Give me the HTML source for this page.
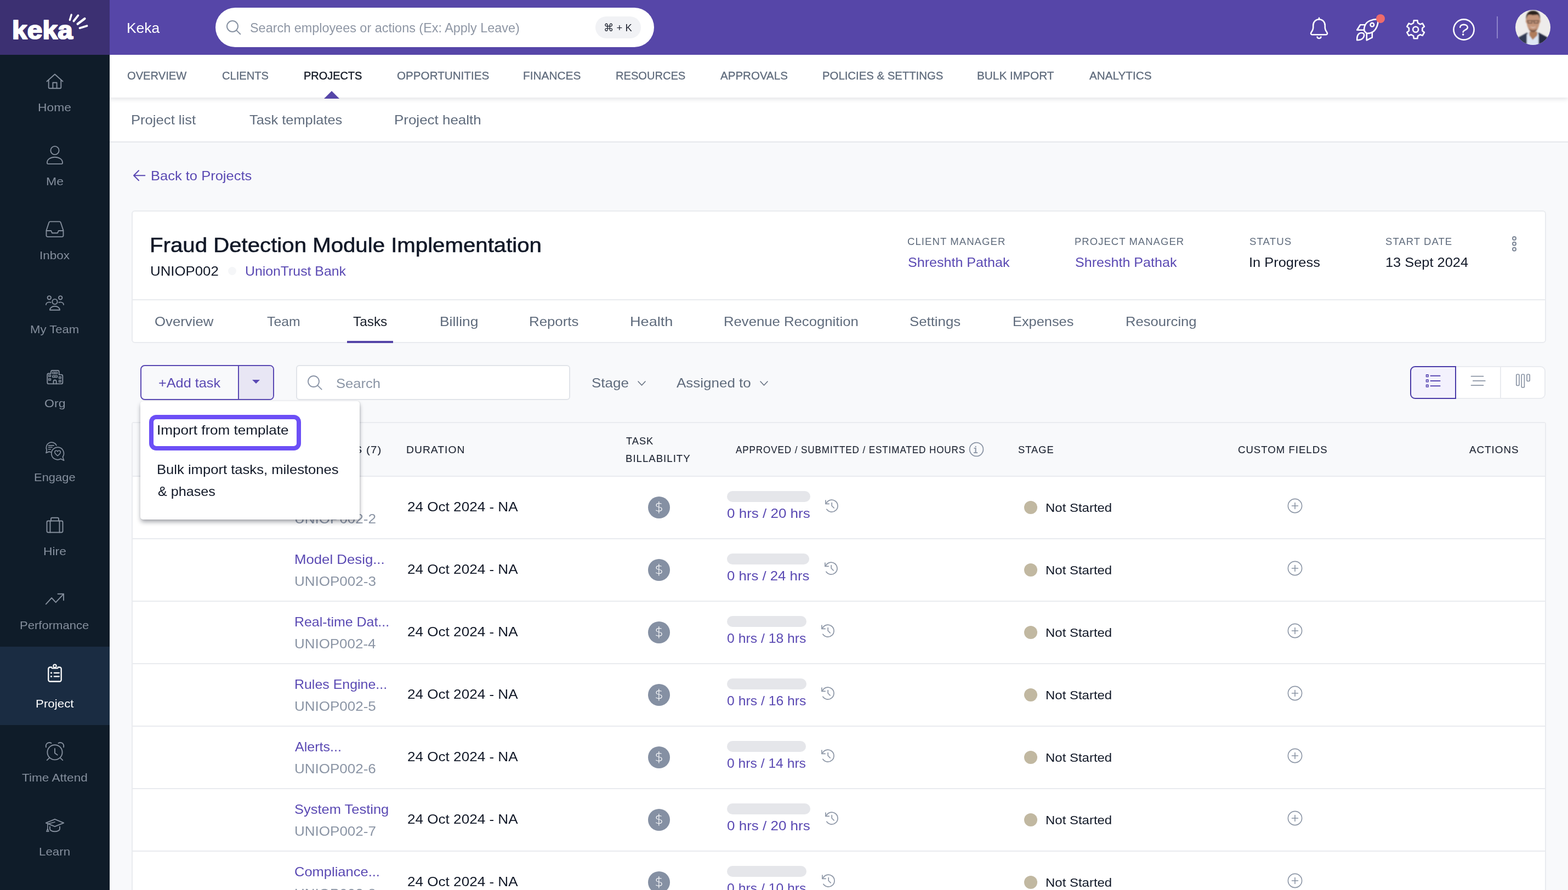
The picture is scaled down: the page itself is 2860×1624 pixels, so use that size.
<!DOCTYPE html>
<html lang="en">
<head>
<meta charset="utf-8">
<title>Keka - Fraud Detection Module Implementation - Tasks</title>
<style>
*{box-sizing:border-box;margin:0;padding:0}
html,body{width:2860px;height:1624px;overflow:hidden;background:#f8f9fb;font-family:"Liberation Sans", sans-serif;-webkit-font-smoothing:antialiased}
.abs{position:absolute;display:block}
.t{position:absolute;display:block;white-space:pre;transform-origin:0 50%}
#app{position:relative;width:2860px;height:1624px;overflow:hidden;background:#f8f9fb}
aside{position:absolute;left:0;top:0;width:200px;height:1624px;background:#0f1c29}
.logo{position:absolute;left:0;top:0;width:200px;height:100px;background:#3c3072}
.active{position:absolute;left:0;top:1180px;width:200px;height:143px;background:#1a2c42}
header{position:absolute;left:200px;top:0;width:2660px;height:100px;background:#5646a8}
.search{position:absolute;left:393px;top:14px;width:800px;height:72px;border-radius:36px;background:#fff}
.kbd{position:absolute;left:1086px;top:30px;width:83px;height:40px;border-radius:20px;background:#f1f2f5}
nav.mod{position:absolute;left:200px;top:100px;width:2660px;height:78px;background:#fff;box-shadow:0 3px 8px rgba(40,50,70,.13)}
.tri{position:absolute;left:591px;top:166px;width:0;height:0;border-left:14px solid transparent;border-right:14px solid transparent;border-bottom:14px solid #5646a8}
nav.sub{position:absolute;left:200px;top:178px;width:2660px;height:82px;background:#fff;border-bottom:2px solid #e6e8ec}
.card{position:absolute;left:240px;top:384px;width:2580px;height:242px;background:#fff;border:2px solid #e9ebef;border-radius:6px}
.cardline{position:absolute;left:242px;top:546px;width:2576px;height:2px;background:#e9ebef}
.tabline{position:absolute;left:633px;top:622px;width:84px;height:4px;background:#5646a8}
.addbtn{position:absolute;left:256px;top:666px;width:244px;height:64px;border:2px solid #5a49b3;border-radius:8px;background:#f8f9fb;overflow:hidden}
.addbtn i{position:absolute;left:176px;top:0;width:66px;height:60px;background:#e8e6f4;border-left:2px solid #5a49b3}
.caret{position:absolute;left:460px;top:693px;width:0;height:0;border-left:7px solid transparent;border-right:7px solid transparent;border-top:7px solid #5a49b3}
.sbox{position:absolute;left:540px;top:666px;width:500px;height:64px;border:2px solid #e1e4e9;border-radius:6px;background:#fff}
.views{position:absolute;left:2572px;top:668px;width:247px;height:60px;border:2px solid #e9ebef;border-radius:9px;background:#fff}
.views .on{position:absolute;left:-2px;top:-2px;width:84px;height:60px;border:2px solid #4a3aa8;border-radius:9px 0 0 9px;background:#f3f1fd}
.views .dv{position:absolute;left:162px;top:0;width:2px;height:56px;background:#e9ebef}
.table{position:absolute;left:240px;top:770px;width:2580px;height:900px;background:#fff;border:2px solid #e9ebef;border-radius:4px}
.thead{position:absolute;left:242px;top:772px;width:2576px;height:96px;background:#f8f9fb}
.hline{position:absolute;left:242px;top:868px;width:2576px;height:2px;background:#e9ebef}
.row{position:absolute;left:242px;width:2576px;height:114px;border-bottom:2px solid #e9ebef}
.drop{position:absolute;left:256px;top:732px;width:400px;height:216px;background:#fff;border-radius:5px;box-shadow:0 5px 9px -1px rgba(10,15,30,.40),1px 0 3px rgba(10,15,30,.10)}
.hl{position:absolute;left:272px;top:757px;width:277px;height:65px;border:8px solid #6c4ff6;border-radius:13px}
@media (max-width:1600px){#app{zoom:.5}}
</style>
</head>
<body>
<div id="app">

<nav class="sub" aria-label="Project sections"></nav>
<span class="t" style="left:239px;top:203px;font-size:24px;line-height:32px;color:#5f6b7c;transform:scaleX(1.0676);">Project list</span>
<span class="t" style="left:455px;top:203px;font-size:24px;line-height:32px;color:#5f6b7c;transform:scaleX(1.0572);">Task templates</span>
<span class="t" style="left:719px;top:203px;font-size:24px;line-height:32px;color:#5f6b7c;transform:scaleX(1.0810);">Project health</span>
<nav class="mod" aria-label="Modules"></nav>
<span class="t" style="left:232px;top:124px;font-size:21px;line-height:28px;color:#5f6b7c;-webkit-text-stroke:0.3px #5f6b7c;transform:scaleX(0.9596);">OVERVIEW</span>
<span class="t" style="left:405px;top:124px;font-size:21px;line-height:28px;color:#5f6b7c;-webkit-text-stroke:0.3px #5f6b7c;transform:scaleX(0.9576);">CLIENTS</span>
<span class="t" style="left:554px;top:124px;font-size:21px;line-height:28px;color:#141a26;-webkit-text-stroke:0.45px #141a26;transform:scaleX(0.9487);">PROJECTS</span>
<span class="t" style="left:724px;top:124px;font-size:21px;line-height:28px;color:#5f6b7c;-webkit-text-stroke:0.3px #5f6b7c;transform:scaleX(0.9826);">OPPORTUNITIES</span>
<span class="t" style="left:954px;top:124px;font-size:21px;line-height:28px;color:#5f6b7c;-webkit-text-stroke:0.3px #5f6b7c;transform:scaleX(0.9928);">FINANCES</span>
<span class="t" style="left:1123px;top:124px;font-size:21px;line-height:28px;color:#5f6b7c;-webkit-text-stroke:0.3px #5f6b7c;transform:scaleX(0.9566);">RESOURCES</span>
<span class="t" style="left:1314px;top:124px;font-size:21px;line-height:28px;color:#5f6b7c;-webkit-text-stroke:0.3px #5f6b7c;transform:scaleX(0.9778);">APPROVALS</span>
<span class="t" style="left:1500px;top:124px;font-size:21px;line-height:28px;color:#5f6b7c;-webkit-text-stroke:0.3px #5f6b7c;transform:scaleX(0.9682);">POLICIES &amp; SETTINGS</span>
<span class="t" style="left:1782px;top:124px;font-size:21px;line-height:28px;color:#5f6b7c;-webkit-text-stroke:0.3px #5f6b7c;transform:scaleX(0.9897);">BULK IMPORT</span>
<span class="t" style="left:1987px;top:124px;font-size:21px;line-height:28px;color:#5f6b7c;-webkit-text-stroke:0.3px #5f6b7c;transform:scaleX(0.9857);">ANALYTICS</span>
<div class="tri"></div>

<header></header>
<div class="search"></div>
<div class="kbd"></div>
<svg class="abs" style="left:411.3px;top:35.4px" width="37.5" height="37.5" viewBox="411.3 35.4 37.5 37.5" fill="none" stroke="#8792a2" stroke-width="2" stroke-linecap="round"><circle cx="424.3" cy="48.4" r="10"/><path d="M431.9 56.0l6.7 6.7"/></svg>
<span class="t" style="left:231px;top:34px;font-size:26px;line-height:34px;color:#ffffff;transform:scaleX(1.0151);">Keka</span>
<span class="t" style="left:456px;top:35px;font-size:24.5px;line-height:32px;color:#8e96a4;transform:scaleX(0.9554);">Search employees or actions (Ex: Apply Leave)</span>
<span class="t" style="left:1101px;top:39px;font-size:19px;line-height:24px;color:#1f2430;transform:scaleX(0.9707);">⌘ + K</span>
<svg class="abs" style="left:2340px;top:0" width="520" height="100" viewBox="2340 0 520 100" fill="none" stroke="#fff" stroke-width="2.600" stroke-linecap="round" stroke-linejoin="round">
<path d="M2406 32.700v2.300"/><path d="M2406 35.200c-6 0-10.800 4.900-10.800 11v4c0 4-1.600 6.200-3.600 9-1.300 1.800-.300 4.100 1.800 4.100h25.200c2.100 0 3.100-2.300 1.800-4.100-2-2.800-3.600-5-3.600-9v-4c0-6.100-4.800-11-10.800-11z"/><path d="M2402.600 67.600a3.600 3.600 0 0 0 6.800 0"/>
<path d="M2513.200 35.200C2503 34.700 2493.500 39 2490.700 44.500 2488.600 48.500 2487.600 53 2488.500 56.500L2492.700 60.800C2497 61.200 2501.500 60 2505 57.500 2510.200 53.500 2514.500 44.500 2513.200 35.200Z"/><circle cx="2502.800" cy="45.200" r="3.300"/><path d="M2489.800 45.300h-8.600l-6 9.400h13"/><path d="M2502.800 59.200v9.200l-10 5v-12.500"/><path d="M2475.200 73.200C2475 68 2476.500 63.500 2478.700 61.600 2481.500 59.200 2485.500 59.700 2487.500 61.400 2489 64.500 2487.500 68.500 2485 70.500 2482.500 72.500 2479 73.200 2475.200 73.200Z"/>
<path d="M2578.8 37.4 L2585.4 37.4 L2586.1 41.9 L2590.4 44.4 L2594.6 42.7 L2597.9 48.5 L2594.3 51.3 L2594.3 56.3 L2597.9 59.1 L2594.6 64.9 L2590.4 63.2 L2586.1 65.7 L2585.4 70.2 L2578.8 70.2 L2578.1 65.7 L2573.8 63.2 L2569.6 64.9 L2566.3 59.1 L2569.9 56.3 L2569.9 51.3 L2566.3 48.5 L2569.6 42.7 L2573.8 44.4 L2578.1 41.9Z" stroke-linejoin="round"/><circle cx="2582.1" cy="53.8" r="5"/>
<circle cx="2670" cy="54" r="18.600"/><path d="M2663.200 49.800c0-2.800 2.800-4.900 6.700-4.900s7 2.100 7 5.200c0 4.600-8.200 4.400-8.200 8.500"/><path d="M2668.700 63v.100" stroke-width="3.600"/>
<path d="M2731 30.500v39" stroke="#9d93d3" stroke-width="1.600"/>
<circle cx="2518" cy="34" r="8" fill="#ee6b6b" stroke="none"/>
</svg>
<svg class="abs" style="left:2764px;top:18px" width="64" height="64" viewBox="0 0 64 64"><defs><clipPath id="avc"><circle cx="32" cy="32" r="32"/></clipPath><filter id="avb" x="-20%" y="-20%" width="140%" height="140%"><feGaussianBlur stdDeviation="0.900"/></filter></defs><g clip-path="url(#avc)"><rect width="64" height="64" fill="#eeeceb"/><g filter="url(#avb)"><path d="M5 66V50.500L21.300 41.500l10.700 6 10.200-6L59 50.500V66z" fill="#333a52"/><path d="M42.200 41.500 59 50.500V66H43z" fill="#272c42"/><path d="M20.800 66V45l4.800-4.500h14.400l2.400 4.500V66z" fill="#dde6f4"/><path d="M25.600 40h14.400v6.500l-8.400 8.300-6-8.300z" fill="#b07d5c"/><path d="M19.800 18c0-8 5-14.500 12.500-14.500S45 10 44.800 18c.8 0 1.200 1.600.8 3.600-.3 1.800-1 3-1.800 3-.8 7.500-5.500 16.400-11.500 16.400S21.500 32.100 20.800 24.600c-.8 0-1.500-1.200-1.800-3-.4-2 0-3.600.8-3.600z" fill="#c4957a"/><path d="M23.500 33c2 5 5.200 8 8.800 8s6.800-3 8.800-8c-1.500 2.600-5 3.800-8.800 3.800s-7.300-1.200-8.800-3.800z" fill="#6b4a38" opacity=".75"/><path d="M19.600 18.500C18.500 8 23.500 1.600 32.300 1.600S46 8 45 18.500c-.7-5-2.500-8.700-4.600-9.700-3 .8-12.800.8-16 0-2.200 1-4 4.700-4.800 9.700z" fill="#2b221f"/><path d="M27.300 30c1.800 2.600 8.200 2.600 10 0-.8 3.600-9.200 3.600-10 0z" fill="#fbf6f3"/><path d="M21 19.700h22.500M22.800 19.500h7.600v4.600h-7.600zM34 19.500h7.600v4.600H34z" fill="none" stroke="#4a3a33" stroke-width="1.100"/></g></g></svg>

<aside>
<div class="logo"></div>
<div class="active"></div>
</aside>
<svg class="abs" style="left:0;top:0" width="200" height="100" viewBox="0 0 200 100"><text x="0" y="0" transform="translate(21.900 71.400) scale(1.085 1)" font-family="Liberation Sans, sans-serif" font-weight="700" font-size="45.500" fill="#fff" stroke="#fff" stroke-width="2.200" stroke-linejoin="round" letter-spacing="0.300">keka</text></svg><svg class="abs" style="left:0;top:0" width="200" height="100" viewBox="0 0 200 100" fill="none" stroke="#fff" stroke-linecap="round"><path d="M127.300 36.500 130.200 27" stroke-width="3.400"/><path d="M134.400 38.500 142.500 28.200" stroke-width="3.800"/><path d="M141.600 43.700 154.500 34" stroke-width="4.200"/><path d="M145.500 51.300 158.500 47.200" stroke-width="3.800"/></svg>
<svg class="abs" style="left:0;top:0" width="200" height="1624" viewBox="0 0 200 1624" fill="none" stroke="#858f9d" stroke-width="1.900" stroke-linecap="round" stroke-linejoin="round">
<path d="M85.500 148.500 100 135.500 114.500 148.500"/><path d="M88.700 146v13.200a2 2 0 0 0 2 2h18.600a2 2 0 0 0 2-2V146"/><path d="M96.400 161v-10.300h7.200V161"/>
<circle cx="100" cy="274.500" r="7.600"/><path d="M86 296.500c0-5.600 6-9.800 14-9.800s14 4.200 14 9.800v.8a1.800 1.800 0 0 1-1.800 1.800H87.800a1.800 1.800 0 0 1-1.800-1.800z"/>
<path d="M84.500 420.500 89.300 406a2.400 2.400 0 0 1 2.200-1.600h17a2.400 2.400 0 0 1 2.200 1.600l4.800 14.500v9.200a2.400 2.400 0 0 1-2.400 2.400H86.900a2.400 2.400 0 0 1-2.400-2.400z"/><path d="M84.800 421h8.400l1.800 4.200h10l1.800-4.200h8.400"/>
<circle cx="100" cy="550.500" r="4.600"/><path d="M91 565.800c0-4.200 4-7 9-7s9 2.800 9 7z"/><circle cx="89.800" cy="543.300" r="3.200"/><circle cx="110.200" cy="543.300" r="3.200"/><path d="M84 556c0-2.600 2.400-4.600 5.800-4.600 1 0 2 .2 2.800.5"/><path d="M116 556c0-2.600-2.400-4.600-5.800-4.600-1 0-2 .2-2.800.5"/>
<path d="M86.300 698V684a2.500 2.500 0 0 1 2.500-2.500H93V678.500a2.500 2.500 0 0 1 2.500-2.500h9.700a2.500 2.500 0 0 1 2.500 2.500v5.100h4.100a2.500 2.500 0 0 1 2.500 2.500V698a2.400 2.400 0 0 1-2.400 2.400H88.700a2.400 2.400 0 0 1-2.400-2.400z"/><path d="M97.500 700.400v-4.300a2.600 2.600 0 0 1 5.200 0v4.300"/><path d="M96 679h8.400v3H96zM100.200 679v3M96 685.600h8.400v3H96zM100.200 685.600v3M89 684.300h3.500v3H89zM89 691h3.500v3H89zM107.600 687.500h3.500v3h-3.500zM107.600 694h3.500v3h-3.500z" stroke-width="1.500"/>
<path d="M103 812.600A9.600 9.600 0 1 0 85.300 821.300L84.100 826.400 89.500 824.100A9.600 9.600 0 0 0 92.600 824.900" stroke-width="1.700"/><path d="M88.400 812.900h9.800M88.400 816.300h6.700M88.400 819.800h4" stroke-width="1.600"/><path d="M110.700 837.200A11.300 11.300 0 1 1 114.400 833.800L116.600 840.200Z" stroke-width="1.700"/><path d="M105.100 831.700c-2.600-2-5.300-4-5.300-6.600a2.800 2.800 0 0 1 5.300-1.300 2.800 2.800 0 0 1 5.300 1.300c0 2.600-2.700 4.600-5.300 6.600z" stroke-width="1.600"/>
<rect x="85.500" y="950.500" width="29" height="21" rx="2.500"/><path d="M93 950.500v-3.700a2 2 0 0 1 2-2h10a2 2 0 0 1 2 2v3.700"/><path d="M91.500 950.500v21M108.500 950.500v21"/>
<path d="M83.800 1102.300 94.200 1091l7.500 8.200 14.300-15.400"/><path d="M105.500 1083.800h10.500v11.500"/>
<circle cx="100" cy="1372.800" r="13.600"/><path d="M100 1366v8.200l4.700 3.400"/><path d="M83.900 1363.400c-1.200-4.400 1.800-8.400 6-8.400 1.400 0 2.600.3 3.600 1M116.100 1363.400c1.200-4.400-1.800-8.400-6-8.400-1.400 0-2.600.3-3.600 1M90.200 1382.900l-4.500 4.200M109.800 1382.900l4.500 4.200"/>
<path d="M100 1494.800 83.800 1501.600 100 1508.200 116.200 1501.600z"/><path d="M91 1508.500v4c0 2.700 4 4.800 9 4.800s9-2.100 9-4.800v-4"/><path d="M100 1499.900 86.900 1503.400v8.600M86.900 1512l-1.900 5.300h3.800z" stroke-width="1.600"/>
</svg>
<svg class="abs" style="left:0;top:0" width="200" height="1624" viewBox="0 0 200 1624" fill="none" stroke="#ffffff" stroke-width="2.300" stroke-linecap="round" stroke-linejoin="round">
<path d="M94.300 1217.500h-3a3 3 0 0 0-3 3v20a3 3 0 0 0 3 3h17.400a3 3 0 0 0 3-3v-20a3 3 0 0 0-3-3h-3"/><circle cx="100" cy="1215.300" r="2.700" stroke-width="2"/><path d="M94.800 1219.400h10.400"/><path d="M98.800 1227.800h9M98.800 1234.300h9"/><path d="M93.500 1227.800h.100M93.500 1234.300h.100" stroke-width="3.200"/>
</svg>
<span class="t" style="left:69px;top:183px;font-size:20.2px;line-height:26px;color:#858f9d;transform:scaleX(1.1317);">Home</span>
<span class="t" style="left:84px;top:318px;font-size:20.2px;line-height:26px;color:#858f9d;transform:scaleX(1.1399);">Me</span>
<span class="t" style="left:72px;top:453px;font-size:20.2px;line-height:26px;color:#858f9d;transform:scaleX(1.1146);">Inbox</span>
<span class="t" style="left:55px;top:588px;font-size:20.2px;line-height:26px;color:#858f9d;transform:scaleX(1.0936);">My Team</span>
<span class="t" style="left:81px;top:723px;font-size:20.2px;line-height:26px;color:#858f9d;transform:scaleX(1.1442);">Org</span>
<span class="t" style="left:62px;top:858px;font-size:20.2px;line-height:26px;color:#858f9d;transform:scaleX(1.0862);">Engage</span>
<span class="t" style="left:79px;top:993px;font-size:20.2px;line-height:26px;color:#858f9d;transform:scaleX(1.1323);">Hire</span>
<span class="t" style="left:36px;top:1128px;font-size:20.2px;line-height:26px;color:#858f9d;transform:scaleX(1.0934);">Performance</span>
<span class="t" style="left:65px;top:1271px;font-size:20.2px;line-height:26px;color:#ffffff;transform:scaleX(1.1064);">Project</span>
<span class="t" style="left:40px;top:1406px;font-size:20.2px;line-height:26px;color:#858f9d;transform:scaleX(1.1200);">Time Attend</span>
<span class="t" style="left:71px;top:1541px;font-size:20.2px;line-height:26px;color:#858f9d;transform:scaleX(1.1058);">Learn</span>

<main>
<svg class="abs" style="left:240px;top:308px" width="28" height="24" viewBox="240 308 28 24" fill="none" stroke="#5a49b3" stroke-width="2" stroke-linecap="round" stroke-linejoin="round"><path d="M264.300 320.300h-20.300M253 311.300l-9 9 9 9"/></svg>
<span class="t" style="left:275px;top:305px;font-size:24px;line-height:32px;color:#5a49b3;transform:scaleX(1.0626);">Back to Projects</span>

<section class="card"></section>
<div class="cardline"></div>
<div class="tabline"></div>
<div class="abs" style="left:416px;top:487px;width:15px;height:15px;border-radius:50%;background:#f5f6f8"></div>
<svg class="abs" style="left:2754px;top:428px" width="16" height="34" viewBox="2754 428 16 34" fill="none" stroke="#7d8797" stroke-width="2"><circle cx="2762" cy="434.900" r="3"/><circle cx="2762" cy="444.800" r="3"/><circle cx="2762" cy="454.800" r="3"/></svg>
<span class="t" style="left:273px;top:423px;font-size:37.2px;line-height:48px;color:#111827;-webkit-text-stroke:0.6px #111827;transform:scaleX(1.0809);">Fraud Detection Module Implementation</span>
<span class="t" style="left:274px;top:479px;font-size:24px;line-height:32px;color:#111827;transform:scaleX(1.0750);">UNIOP002</span>
<span class="t" style="left:447px;top:479px;font-size:24px;line-height:32px;color:#5a49b3;transform:scaleX(1.0340);">UnionTrust Bank</span>
<span class="t" style="left:1655px;top:429px;font-size:17.8px;line-height:24px;color:#5f6b7c;letter-spacing:1px;transform:scaleX(1.0445);">CLIENT MANAGER</span>
<span class="t" style="left:1656px;top:463px;font-size:24px;line-height:32px;color:#5a49b3;transform:scaleX(1.0450);">Shreshth Pathak</span>
<span class="t" style="left:1960px;top:429px;font-size:17.8px;line-height:24px;color:#5f6b7c;letter-spacing:1px;transform:scaleX(1.0398);">PROJECT MANAGER</span>
<span class="t" style="left:1961px;top:463px;font-size:24px;line-height:32px;color:#5a49b3;transform:scaleX(1.0450);">Shreshth Pathak</span>
<span class="t" style="left:2279px;top:429px;font-size:17.8px;line-height:24px;color:#5f6b7c;letter-spacing:1px;transform:scaleX(1.0499);">STATUS</span>
<span class="t" style="left:2278px;top:463px;font-size:24px;line-height:32px;color:#111827;transform:scaleX(1.0584);">In Progress</span>
<span class="t" style="left:2527px;top:429px;font-size:17.8px;line-height:24px;color:#5f6b7c;letter-spacing:1px;transform:scaleX(1.0411);">START DATE</span>
<span class="t" style="left:2527px;top:463px;font-size:24px;line-height:32px;color:#111827;transform:scaleX(1.0576);">13 Sept 2024</span>
<span class="t" style="left:282px;top:571px;font-size:24px;line-height:32px;color:#5f6b7c;transform:scaleX(1.0727);">Overview</span>
<span class="t" style="left:487px;top:571px;font-size:24px;line-height:32px;color:#5f6b7c;transform:scaleX(1.0336);">Team</span>
<span class="t" style="left:644px;top:571px;font-size:24px;line-height:32px;color:#141a26;transform:scaleX(1.0157);">Tasks</span>
<span class="t" style="left:802px;top:571px;font-size:24px;line-height:32px;color:#5f6b7c;transform:scaleX(1.1002);">Billing</span>
<span class="t" style="left:965px;top:571px;font-size:24px;line-height:32px;color:#5f6b7c;transform:scaleX(1.0757);">Reports</span>
<span class="t" style="left:1149px;top:571px;font-size:24px;line-height:32px;color:#5f6b7c;transform:scaleX(1.1307);">Health</span>
<span class="t" style="left:1320px;top:571px;font-size:24px;line-height:32px;color:#5f6b7c;transform:scaleX(1.0707);">Revenue Recognition</span>
<span class="t" style="left:1659px;top:571px;font-size:24px;line-height:32px;color:#5f6b7c;transform:scaleX(1.0737);">Settings</span>
<span class="t" style="left:1847px;top:571px;font-size:24px;line-height:32px;color:#5f6b7c;transform:scaleX(1.0565);">Expenses</span>
<span class="t" style="left:2053px;top:571px;font-size:24px;line-height:32px;color:#5f6b7c;transform:scaleX(1.0673);">Resourcing</span>

<div class="addbtn"><i></i></div>
<div class="caret"></div>
<div class="sbox"></div>
<svg class="abs" style="left:558.5px;top:682.5px" width="38" height="38" viewBox="558.5 682.5 38 38" fill="none" stroke="#8a94a6" stroke-width="1.8" stroke-linecap="round"><circle cx="571.5" cy="695.5" r="10"/><path d="M579.1 703.1l7.1 7.1"/></svg>
<svg class="abs" style="left:1161.5px;top:694.0px" width="17" height="11" viewBox="0 0 17 11" fill="none" stroke="#5f6b7c" stroke-width="1.5" stroke-linecap="round" stroke-linejoin="round"><path d="M2 2l6.5 7l6.5-7"/></svg>
<svg class="abs" style="left:1385.0px;top:694.0px" width="17" height="11" viewBox="0 0 17 11" fill="none" stroke="#5f6b7c" stroke-width="1.5" stroke-linecap="round" stroke-linejoin="round"><path d="M2 2l6.5 7l6.5-7"/></svg>
<div class="views"><div class="on"></div><div class="dv"></div></div>
<svg class="abs" style="left:2590px;top:680px" width="220" height="36" viewBox="2590 680 220 36" fill="none" stroke="#5a49b3" stroke-width="2" stroke-linecap="round">
<path d="M2609.500 685.700h17M2609.500 694.900h17M2609.500 704.200h17"/><path d="M2601.500 683.900h3.600v3.600h-3.600zM2601.500 693.100h3.600v3.600h-3.600zM2601.500 702.400h3.600v3.600h-3.600z" stroke-width="1.600" stroke-linejoin="round"/>
<path d="M2683.500 686.700h22M2686.800 694.900h22M2683.500 703.200h22" stroke="#8b95a5" stroke-width="1.700"/>
<rect x="2765.800" y="683" width="5.200" height="20.500" rx="2" stroke="#8b95a5" stroke-width="1.700"/><rect x="2775.200" y="683" width="5.200" height="24" rx="2" stroke="#8b95a5" stroke-width="1.700"/><rect x="2785" y="683" width="5.200" height="12.500" rx="2" stroke="#8b95a5" stroke-width="1.700"/>
</svg>
<span class="t" style="left:289px;top:683px;font-size:24px;line-height:32px;color:#5a49b3;transform:scaleX(1.0528);">+Add task</span>
<span class="t" style="left:613px;top:684px;font-size:24px;line-height:32px;color:#8b95a5;transform:scaleX(1.0651);">Search</span>
<span class="t" style="left:1079px;top:683px;font-size:24px;line-height:32px;color:#5f6b7c;transform:scaleX(1.0829);">Stage</span>
<span class="t" style="left:1234px;top:683px;font-size:24px;line-height:32px;color:#5f6b7c;transform:scaleX(1.0827);">Assigned to</span>

<section class="table"></section>
<div class="thead"></div>
<div class="hline"></div>
<span class="t" style="left:590px;top:809px;font-size:19px;line-height:24px;color:#1c2331;letter-spacing:1px;-webkit-text-stroke:0.12px #1c2331;transform:scaleX(1.0818);">TASKS (7)</span>
<span class="t" style="left:741px;top:809px;font-size:19px;line-height:24px;color:#1c2331;letter-spacing:1px;-webkit-text-stroke:0.12px #1c2331;transform:scaleX(1.0151);">DURATION</span>
<span class="t" style="left:1142px;top:793px;font-size:19px;line-height:24px;color:#1c2331;letter-spacing:1px;-webkit-text-stroke:0.12px #1c2331;transform:scaleX(0.9629);">TASK</span>
<span class="t" style="left:1141px;top:825px;font-size:19px;line-height:24px;color:#1c2331;letter-spacing:1px;-webkit-text-stroke:0.12px #1c2331;transform:scaleX(0.9814);">BILLABILITY</span>
<span class="t" style="left:1342px;top:809px;font-size:19px;line-height:24px;color:#1c2331;letter-spacing:1px;-webkit-text-stroke:0.12px #1c2331;transform:scaleX(0.8988);">APPROVED / SUBMITTED / ESTIMATED HOURS</span>
<span class="t" style="left:1857px;top:809px;font-size:19px;line-height:24px;color:#1c2331;letter-spacing:1px;-webkit-text-stroke:0.12px #1c2331;transform:scaleX(0.9643);">STAGE</span>
<span class="t" style="left:2258px;top:809px;font-size:19px;line-height:24px;color:#1c2331;letter-spacing:1px;-webkit-text-stroke:0.12px #1c2331;transform:scaleX(0.9806);">CUSTOM FIELDS</span>
<span class="t" style="left:2680px;top:809px;font-size:19px;line-height:24px;color:#1c2331;letter-spacing:1px;-webkit-text-stroke:0.12px #1c2331;transform:scaleX(0.9905);">ACTIONS</span>
<svg class="abs" style="left:1765.500px;top:804.800px" width="30" height="30" viewBox="-15 -15 30 30" fill="none" stroke="#8b95a5" stroke-width="1.800"><circle r="12.400"/></svg>
<span class="t" style="left:1775.200px;top:809.800px;font-size:18px;line-height:24px;color:#8b95a5;font-family:'Liberation Mono',monospace;font-weight:700;transform:scaleX(.8)">i</span>
<div class="row" style="top:870px"></div>
<span class="t" style="left:537px;top:931px;font-size:24px;line-height:32px;color:#8b95a5;transform:scaleX(1.0841);">UNIOP002-2</span>
<span class="t" style="left:743px;top:909px;font-size:24px;line-height:32px;color:#111827;transform:scaleX(1.0873);">24 Oct 2024 - NA</span>
<span class="t" style="left:1326px;top:921px;font-size:24px;line-height:32px;color:#5a49b3;transform:scaleX(1.0829);">0 hrs / 20 hrs</span>
<span class="t" style="left:1907px;top:911px;font-size:22.8px;line-height:30px;color:#111827;transform:scaleX(1.0510);">Not Started</span>
<div class="abs" style="left:1182px;top:906px;width:40px;height:40px;border-radius:50%;background:#8590a3"></div>
<span class="t" style="left:1182px;top:905px;width:40px;text-align:center;font-family:'DejaVu Sans',sans-serif;font-weight:200;font-size:23px;line-height:40px;color:#fff;transform-origin:50% 50%;transform:scaleX(1.05)">$</span>
<div class="abs" style="left:1326px;top:896px;width:151.6px;height:20px;border-radius:10px;background:#e5e6ea"></div>
<svg class="abs" style="left:1503.4px;top:909px" width="28" height="28" viewBox="-14 -14 28 28" fill="none" stroke="#8b95a5" stroke-width="1.700" stroke-linecap="round" stroke-linejoin="round"><path d="M-9.600 -5.200A11 11 0 1 1 -9.100 6.300"/><path d="M-11.100 -9.900V-3.600H-4.900"/><path d="M.200 -5.500V0l3.900 3.800"/></svg>
<div class="abs" style="left:1868px;top:914px;width:24px;height:24px;border-radius:50%;background:#c1b8a1"></div>
<svg class="abs" style="left:2346px;top:907px" width="32" height="32" viewBox="-16 -16 32 32" fill="none" stroke="#8b95a5" stroke-width="1.600" stroke-linecap="round"><circle r="12.600"/><path d="M-5.500 0h11M0 -5.500v11"/></svg>
<div class="row" style="top:984px"></div>
<span class="t" style="left:537px;top:1005px;font-size:24px;line-height:32px;color:#5a49b3;transform:scaleX(1.0736);">Model Desig...</span>
<span class="t" style="left:537px;top:1045px;font-size:24px;line-height:32px;color:#8b95a5;transform:scaleX(1.0836);">UNIOP002-3</span>
<span class="t" style="left:743px;top:1023px;font-size:24px;line-height:32px;color:#111827;transform:scaleX(1.0873);">24 Oct 2024 - NA</span>
<span class="t" style="left:1326px;top:1035px;font-size:24px;line-height:32px;color:#5a49b3;transform:scaleX(1.0735);">0 hrs / 24 hrs</span>
<span class="t" style="left:1907px;top:1025px;font-size:22.8px;line-height:30px;color:#111827;transform:scaleX(1.0510);">Not Started</span>
<div class="abs" style="left:1182px;top:1020px;width:40px;height:40px;border-radius:50%;background:#8590a3"></div>
<span class="t" style="left:1182px;top:1019px;width:40px;text-align:center;font-family:'DejaVu Sans',sans-serif;font-weight:200;font-size:23px;line-height:40px;color:#fff;transform-origin:50% 50%;transform:scaleX(1.05)">$</span>
<div class="abs" style="left:1326px;top:1010px;width:150.3px;height:20px;border-radius:10px;background:#e5e6ea"></div>
<svg class="abs" style="left:1502.4px;top:1023px" width="28" height="28" viewBox="-14 -14 28 28" fill="none" stroke="#8b95a5" stroke-width="1.700" stroke-linecap="round" stroke-linejoin="round"><path d="M-9.600 -5.200A11 11 0 1 1 -9.100 6.300"/><path d="M-11.100 -9.900V-3.600H-4.900"/><path d="M.200 -5.500V0l3.900 3.800"/></svg>
<div class="abs" style="left:1868px;top:1028px;width:24px;height:24px;border-radius:50%;background:#c1b8a1"></div>
<svg class="abs" style="left:2346px;top:1021px" width="32" height="32" viewBox="-16 -16 32 32" fill="none" stroke="#8b95a5" stroke-width="1.600" stroke-linecap="round"><circle r="12.600"/><path d="M-5.500 0h11M0 -5.500v11"/></svg>
<div class="row" style="top:1098px"></div>
<span class="t" style="left:537px;top:1119px;font-size:24px;line-height:32px;color:#5a49b3;transform:scaleX(1.0383);">Real-time Dat...</span>
<span class="t" style="left:537px;top:1159px;font-size:24px;line-height:32px;color:#8b95a5;transform:scaleX(1.0804);">UNIOP002-4</span>
<span class="t" style="left:743px;top:1137px;font-size:24px;line-height:32px;color:#111827;transform:scaleX(1.0873);">24 Oct 2024 - NA</span>
<span class="t" style="left:1326px;top:1149px;font-size:24px;line-height:32px;color:#5a49b3;transform:scaleX(1.0316);">0 hrs / 18 hrs</span>
<span class="t" style="left:1907px;top:1139px;font-size:22.8px;line-height:30px;color:#111827;transform:scaleX(1.0510);">Not Started</span>
<div class="abs" style="left:1182px;top:1134px;width:40px;height:40px;border-radius:50%;background:#8590a3"></div>
<span class="t" style="left:1182px;top:1133px;width:40px;text-align:center;font-family:'DejaVu Sans',sans-serif;font-weight:200;font-size:23px;line-height:40px;color:#fff;transform-origin:50% 50%;transform:scaleX(1.05)">$</span>
<div class="abs" style="left:1326px;top:1124px;width:144.5px;height:20px;border-radius:10px;background:#e5e6ea"></div>
<svg class="abs" style="left:1496.4px;top:1137px" width="28" height="28" viewBox="-14 -14 28 28" fill="none" stroke="#8b95a5" stroke-width="1.700" stroke-linecap="round" stroke-linejoin="round"><path d="M-9.600 -5.200A11 11 0 1 1 -9.100 6.300"/><path d="M-11.100 -9.900V-3.600H-4.900"/><path d="M.200 -5.500V0l3.900 3.800"/></svg>
<div class="abs" style="left:1868px;top:1142px;width:24px;height:24px;border-radius:50%;background:#c1b8a1"></div>
<svg class="abs" style="left:2346px;top:1135px" width="32" height="32" viewBox="-16 -16 32 32" fill="none" stroke="#8b95a5" stroke-width="1.600" stroke-linecap="round"><circle r="12.600"/><path d="M-5.500 0h11M0 -5.500v11"/></svg>
<div class="row" style="top:1212px"></div>
<span class="t" style="left:537px;top:1233px;font-size:24px;line-height:32px;color:#5a49b3;transform:scaleX(1.0389);">Rules Engine...</span>
<span class="t" style="left:537px;top:1273px;font-size:24px;line-height:32px;color:#8b95a5;transform:scaleX(1.0829);">UNIOP002-5</span>
<span class="t" style="left:743px;top:1251px;font-size:24px;line-height:32px;color:#111827;transform:scaleX(1.0873);">24 Oct 2024 - NA</span>
<span class="t" style="left:1326px;top:1263px;font-size:24px;line-height:32px;color:#5a49b3;transform:scaleX(1.0316);">0 hrs / 16 hrs</span>
<span class="t" style="left:1907px;top:1253px;font-size:22.8px;line-height:30px;color:#111827;transform:scaleX(1.0510);">Not Started</span>
<div class="abs" style="left:1182px;top:1248px;width:40px;height:40px;border-radius:50%;background:#8590a3"></div>
<span class="t" style="left:1182px;top:1247px;width:40px;text-align:center;font-family:'DejaVu Sans',sans-serif;font-weight:200;font-size:23px;line-height:40px;color:#fff;transform-origin:50% 50%;transform:scaleX(1.05)">$</span>
<div class="abs" style="left:1326px;top:1238px;width:144.5px;height:20px;border-radius:10px;background:#e5e6ea"></div>
<svg class="abs" style="left:1496.4px;top:1251px" width="28" height="28" viewBox="-14 -14 28 28" fill="none" stroke="#8b95a5" stroke-width="1.700" stroke-linecap="round" stroke-linejoin="round"><path d="M-9.600 -5.200A11 11 0 1 1 -9.100 6.300"/><path d="M-11.100 -9.900V-3.600H-4.900"/><path d="M.200 -5.500V0l3.900 3.800"/></svg>
<div class="abs" style="left:1868px;top:1256px;width:24px;height:24px;border-radius:50%;background:#c1b8a1"></div>
<svg class="abs" style="left:2346px;top:1249px" width="32" height="32" viewBox="-16 -16 32 32" fill="none" stroke="#8b95a5" stroke-width="1.600" stroke-linecap="round"><circle r="12.600"/><path d="M-5.500 0h11M0 -5.500v11"/></svg>
<div class="row" style="top:1326px"></div>
<span class="t" style="left:538px;top:1347px;font-size:24px;line-height:32px;color:#5a49b3;transform:scaleX(1.0430);">Alerts...</span>
<span class="t" style="left:537px;top:1387px;font-size:24px;line-height:32px;color:#8b95a5;transform:scaleX(1.0829);">UNIOP002-6</span>
<span class="t" style="left:743px;top:1365px;font-size:24px;line-height:32px;color:#111827;transform:scaleX(1.0873);">24 Oct 2024 - NA</span>
<span class="t" style="left:1326px;top:1377px;font-size:24px;line-height:32px;color:#5a49b3;transform:scaleX(1.0276);">0 hrs / 14 hrs</span>
<span class="t" style="left:1907px;top:1367px;font-size:22.8px;line-height:30px;color:#111827;transform:scaleX(1.0510);">Not Started</span>
<div class="abs" style="left:1182px;top:1362px;width:40px;height:40px;border-radius:50%;background:#8590a3"></div>
<span class="t" style="left:1182px;top:1361px;width:40px;text-align:center;font-family:'DejaVu Sans',sans-serif;font-weight:200;font-size:23px;line-height:40px;color:#fff;transform-origin:50% 50%;transform:scaleX(1.05)">$</span>
<div class="abs" style="left:1326px;top:1352px;width:144.0px;height:20px;border-radius:10px;background:#e5e6ea"></div>
<svg class="abs" style="left:1495.9px;top:1365px" width="28" height="28" viewBox="-14 -14 28 28" fill="none" stroke="#8b95a5" stroke-width="1.700" stroke-linecap="round" stroke-linejoin="round"><path d="M-9.600 -5.200A11 11 0 1 1 -9.100 6.300"/><path d="M-11.100 -9.900V-3.600H-4.900"/><path d="M.200 -5.500V0l3.900 3.800"/></svg>
<div class="abs" style="left:1868px;top:1370px;width:24px;height:24px;border-radius:50%;background:#c1b8a1"></div>
<svg class="abs" style="left:2346px;top:1363px" width="32" height="32" viewBox="-16 -16 32 32" fill="none" stroke="#8b95a5" stroke-width="1.600" stroke-linecap="round"><circle r="12.600"/><path d="M-5.500 0h11M0 -5.500v11"/></svg>
<div class="row" style="top:1440px"></div>
<span class="t" style="left:537px;top:1461px;font-size:24px;line-height:32px;color:#5a49b3;transform:scaleX(1.0616);">System Testing</span>
<span class="t" style="left:537px;top:1501px;font-size:24px;line-height:32px;color:#8b95a5;transform:scaleX(1.0841);">UNIOP002-7</span>
<span class="t" style="left:743px;top:1479px;font-size:24px;line-height:32px;color:#111827;transform:scaleX(1.0873);">24 Oct 2024 - NA</span>
<span class="t" style="left:1326px;top:1491px;font-size:24px;line-height:32px;color:#5a49b3;transform:scaleX(1.0829);">0 hrs / 20 hrs</span>
<span class="t" style="left:1907px;top:1481px;font-size:22.8px;line-height:30px;color:#111827;transform:scaleX(1.0510);">Not Started</span>
<div class="abs" style="left:1182px;top:1476px;width:40px;height:40px;border-radius:50%;background:#8590a3"></div>
<span class="t" style="left:1182px;top:1475px;width:40px;text-align:center;font-family:'DejaVu Sans',sans-serif;font-weight:200;font-size:23px;line-height:40px;color:#fff;transform-origin:50% 50%;transform:scaleX(1.05)">$</span>
<div class="abs" style="left:1326px;top:1466px;width:151.6px;height:20px;border-radius:10px;background:#e5e6ea"></div>
<svg class="abs" style="left:1503.4px;top:1479px" width="28" height="28" viewBox="-14 -14 28 28" fill="none" stroke="#8b95a5" stroke-width="1.700" stroke-linecap="round" stroke-linejoin="round"><path d="M-9.600 -5.200A11 11 0 1 1 -9.100 6.300"/><path d="M-11.100 -9.900V-3.600H-4.900"/><path d="M.200 -5.500V0l3.900 3.800"/></svg>
<div class="abs" style="left:1868px;top:1484px;width:24px;height:24px;border-radius:50%;background:#c1b8a1"></div>
<svg class="abs" style="left:2346px;top:1477px" width="32" height="32" viewBox="-16 -16 32 32" fill="none" stroke="#8b95a5" stroke-width="1.600" stroke-linecap="round"><circle r="12.600"/><path d="M-5.500 0h11M0 -5.500v11"/></svg>
<div class="row" style="top:1554px"></div>
<span class="t" style="left:537px;top:1575px;font-size:24px;line-height:32px;color:#5a49b3;transform:scaleX(1.0626);">Compliance...</span>
<span class="t" style="left:537px;top:1615px;font-size:24px;line-height:32px;color:#8b95a5;transform:scaleX(1.0822);">UNIOP002-8</span>
<span class="t" style="left:743px;top:1593px;font-size:24px;line-height:32px;color:#111827;transform:scaleX(1.0873);">24 Oct 2024 - NA</span>
<span class="t" style="left:1326px;top:1605px;font-size:24px;line-height:32px;color:#5a49b3;transform:scaleX(1.0316);">0 hrs / 10 hrs</span>
<span class="t" style="left:1907px;top:1595px;font-size:22.8px;line-height:30px;color:#111827;transform:scaleX(1.0510);">Not Started</span>
<div class="abs" style="left:1182px;top:1590px;width:40px;height:40px;border-radius:50%;background:#8590a3"></div>
<span class="t" style="left:1182px;top:1589px;width:40px;text-align:center;font-family:'DejaVu Sans',sans-serif;font-weight:200;font-size:23px;line-height:40px;color:#fff;transform-origin:50% 50%;transform:scaleX(1.05)">$</span>
<div class="abs" style="left:1326px;top:1580px;width:144.5px;height:20px;border-radius:10px;background:#e5e6ea"></div>
<svg class="abs" style="left:1496.9px;top:1593px" width="28" height="28" viewBox="-14 -14 28 28" fill="none" stroke="#8b95a5" stroke-width="1.700" stroke-linecap="round" stroke-linejoin="round"><path d="M-9.600 -5.200A11 11 0 1 1 -9.100 6.300"/><path d="M-11.100 -9.900V-3.600H-4.900"/><path d="M.200 -5.500V0l3.900 3.800"/></svg>
<div class="abs" style="left:1868px;top:1598px;width:24px;height:24px;border-radius:50%;background:#c1b8a1"></div>
<svg class="abs" style="left:2346px;top:1591px" width="32" height="32" viewBox="-16 -16 32 32" fill="none" stroke="#8b95a5" stroke-width="1.600" stroke-linecap="round"><circle r="12.600"/><path d="M-5.500 0h11M0 -5.500v11"/></svg>

<div class="drop"></div>
<div class="hl"></div>
<span class="t" style="left:286px;top:769px;font-size:24px;line-height:32px;color:#111827;transform:scaleX(1.0866);">Import from template</span>
<span class="t" style="left:286px;top:841px;font-size:24px;line-height:32px;color:#111827;transform:scaleX(1.0670);">Bulk import tasks, milestones</span>
<span class="t" style="left:288px;top:881px;font-size:24px;line-height:32px;color:#111827;transform:scaleX(1.0475);">&amp; phases</span>
</main>
</div>
</body>
</html>
